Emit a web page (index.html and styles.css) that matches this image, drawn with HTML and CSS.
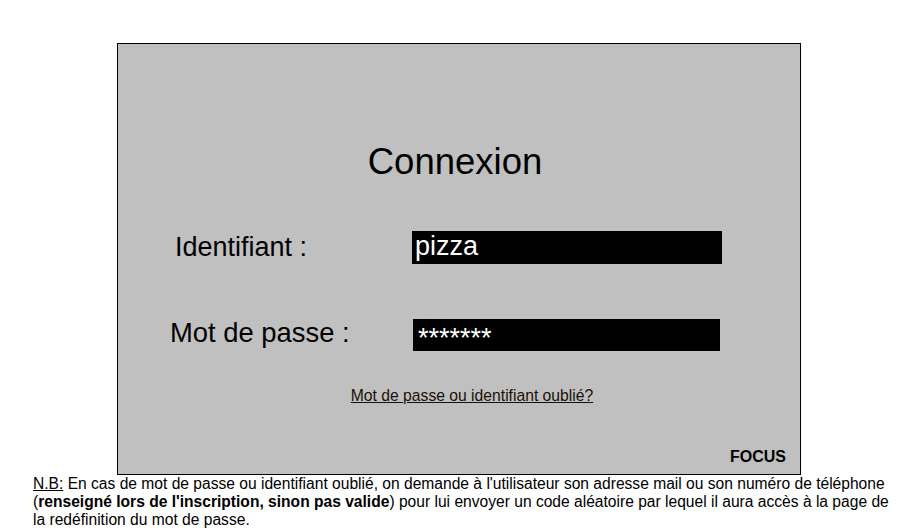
FILE: index.html
```html
<!DOCTYPE html>
<html lang="fr">
<head>
<meta charset="utf-8">
<title>Connexion</title>
<link rel="stylesheet" href="styles.css">
</head>
<body>
<div class="page">
  <div class="box">
    <h1 class="title">Connexion</h1>
    <div class="row row-id">
      <span class="label">Identifiant :</span>
      <div class="field field-id">pizza</div>
    </div>
    <div class="row row-pw">
      <span class="label">Mot de passe :</span>
      <div class="field field-pw">*******</div>
    </div>
    <p class="forgot"><a href="#">Mot de passe ou identifiant oublié?</a></p>
    <p class="focus">FOCUS</p>
  </div>
  <p class="note"><span class="nb">N.B:</span> En cas de mot de passe ou identifiant oublié, on demande à l'utilisateur son adresse mail ou son numéro de téléphone (<b>renseigné lors de l'inscription, sinon pas valide</b>) pour lui envoyer un code aléatoire par lequel il aura accès à la page de la redéfinition du mot de passe.</p>
</div>
</body>
</html>
```

FILE: styles.css
```css
html, body {
  margin: 0;
  padding: 0;
  background: #ffffff;
  font-family: "Liberation Sans", Arial, sans-serif;
  color: #000;
}

.page {
  padding-top: 43px;
}

.box {
  margin-left: 117px;
  width: 682px;
  height: 430px;
  border: 1px solid #000;
  background: #c0c0c0;
  display: flex;
  flex-direction: column;
}

.title {
  margin: 97px 0 0 0;
  padding-right: 8px;
  font-size: 36.5px;
  line-height: 42px;
  font-weight: normal;
  text-align: center;
}

.row {
  display: flex;
  align-items: center;
}

.row-id {
  margin-top: 48px;
  padding-left: 57px;
}

.row-pw {
  margin-top: 55px;
  padding-left: 52px;
  align-items: flex-start;
}

.label {
  font-size: 27px;
  line-height: 33px;
}

.row-id .label {
  width: 237px;
}

.row-pw .label {
  width: 243px;
  font-size: 27.4px;
  line-height: 28px;
}

.field {
  background: #000;
  color: #fff;
  font-size: 27px;
  line-height: 31px;
  box-sizing: border-box;
}

.field-id {
  width: 310px;
  height: 33px;
  padding-left: 3px;
}

.field-pw {
  width: 307px;
  height: 32px;
  padding-left: 5px;
  line-height: 38px;
}

.forgot {
  margin: 36px 0 0 0;
  padding-left: 26px;
  text-align: center;
  font-size: 15.7px;
  line-height: 18px;
}

.forgot a {
  color: #1a1008;
  text-decoration: underline;
}

.focus {
  margin: auto 0 0 0;
  padding: 0 14px 8px 0;
  text-align: right;
  font-size: 16px;
  line-height: 18px;
  font-weight: bold;
}

.note {
  margin: 0 15px 0 33px;
  font-size: 15.6px;
  line-height: 18px;
}

.nb {
  text-decoration: underline;
}
```
